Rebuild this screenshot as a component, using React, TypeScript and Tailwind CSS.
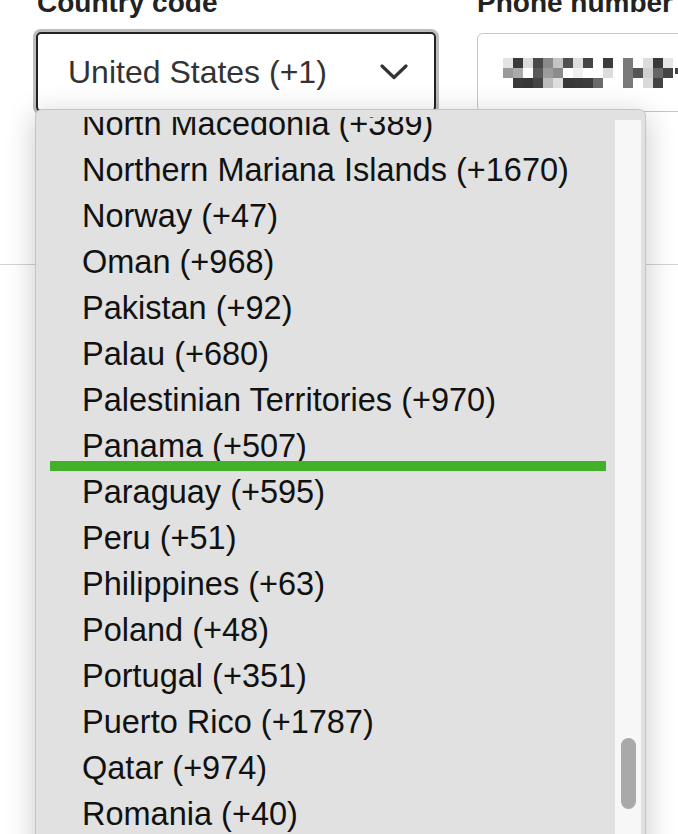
import React from 'react';

const countries = [
  'North Macedonia (+389)',
  'Northern Mariana Islands (+1670)',
  'Norway (+47)',
  'Oman (+968)',
  'Pakistan (+92)',
  'Palau (+680)',
  'Palestinian Territories (+970)',
  'Panama (+507)',
  'Paraguay (+595)',
  'Peru (+51)',
  'Philippines (+63)',
  'Poland (+48)',
  'Portugal (+351)',
  'Puerto Rico (+1787)',
  'Qatar (+974)',
  'Romania (+40)',
  'Russia (+7)',
];

// blurred phone number, drawn as a pixel mosaic
const mosaic = [
  ['#e3e3e3', '#3a3a3a', '#dcdcdc', '#4a4a4a', '#8a8a8a', '#c4c4c4', '#505050', '#dedede', '#454545', '#ffffff', '#3c3c3c', '#ffffff', '#7a7a7a', '#ffffff', '#dcdcdc', '#3a3a3a', '#e5e5e5'],
  ['#9a9a9a', '#ababab', '#ffffff', '#5a5a5a', '#9c9c9c', '#8c8c8c', '#ffffff', '#f0f0f0', '#ffffff', '#ffffff', '#dcdcdc', '#ffffff', '#7a7a7a', '#555555', '#cfcfcf', '#666666', '#444444'],
  ['#ffffff', '#3a3a3a', '#363636', '#454545', '#bcbcbc', '#dedede', '#383838', '#3a3a3a', '#3c3c3c', '#6a6a6a', '#ffffff', '#ffffff', '#7a7a7a', '#ffffff', '#dadada', '#444444', '#ffffff'],
];

export default function App() {
  return (
    <div
      className="relative w-[678px] h-[834px] overflow-hidden bg-white"
      style={{ fontFamily: '"Liberation Sans", Arial, sans-serif' }}
    >
      {/* Form row */}
      <div className="flex gap-[41px] pl-[36px]">
        <div className="w-[400px] shrink-0">
          <p className="-mt-[11px] mb-[15px] ml-[1px] text-[28px] leading-none font-semibold text-[#222]">
            Country code
          </p>
          <div className="flex h-[80px] items-center justify-between rounded-[5px] border-2 border-[#222] pl-[30px] pr-[26px] shadow-[0_0_0_3px_#bdbdbd]">
            <span className="text-[32px] leading-none text-[#333]">United States (+1)</span>
            <svg width="28" height="16" viewBox="0 0 28 16" fill="none">
              <path d="M2 2 L14 13.5 L26 2" stroke="#333" strokeWidth="3.2" strokeLinecap="round" strokeLinejoin="round" />
            </svg>
          </div>
        </div>
        <div className="w-[260px] shrink-0">
          <p className="-mt-[11px] mb-[16px] text-[28px] leading-none font-semibold text-[#222] whitespace-nowrap">
            Phone number
          </p>
          <div className="h-[79px] rounded-[6px] border-[1.5px] border-[#c6c6c6] pl-[25px] pt-[24px]">
            <svg width="180" height="30" viewBox="0 0 180 30">
              {mosaic.map((row, r) =>
                row.map((c, i) => <rect key={`${r}-${i}`} x={i * 10} y={r * 10} width="10" height="10" fill={c} />)
              )}
              <rect x="172" y="10" width="4" height="6" fill="#444" />
            </svg>
          </div>
        </div>
      </div>

      <div className="mt-[152px] border-t border-[#d2d2d2]" />

      {/* Open select popup */}
      <div className="absolute left-[35px] top-[109px] flex h-[760px] w-[611px] rounded-t-[7px] border border-[#c4c4c4] bg-[#e0e1e0] shadow-[0_6px_30px_rgba(0,0,0,0.22)]">
        <div className="mt-[7px] flex-1 overflow-hidden">
          <ul className="-mt-[16px] pl-[46px] text-[32.5px] text-[#111]">
            {countries.map((c) => (
              <li key={c} className="h-[46px] leading-[46px] whitespace-nowrap">
                {c}
              </li>
            ))}
          </ul>
        </div>
        <div className="mt-[10px] mr-[4px] w-[26px] bg-[#f7f7f7] pt-[618px]">
          <div className="mx-auto h-[71px] w-[15px] rounded-full bg-[#a9a9a9]" />
        </div>
      </div>

      {/* green marker */}
      <div className="absolute left-[50px] top-[461px] h-[10px] w-[556px] bg-[#43b02a]" />
    </div>
  );
}
